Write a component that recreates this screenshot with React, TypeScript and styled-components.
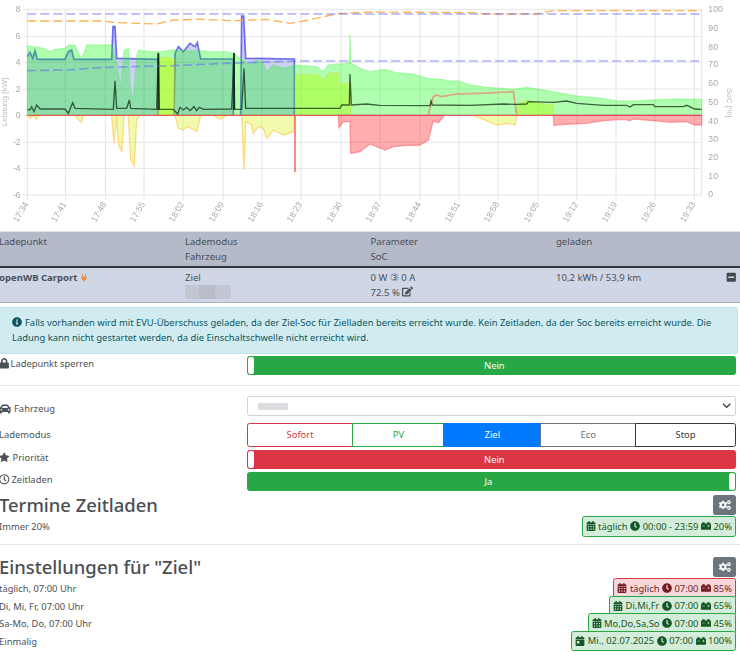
import React from "react";
import styled, { createGlobalStyle } from "styled-components";
import {
  FaCalendarAlt,
  FaCalendarDay,
  FaCar,
  FaCarBattery,
  FaChevronDown,
  FaClock,
  FaCogs,
  FaEdit,
  FaInfoCircle,
  FaLock,
  FaMinusSquare,
  FaPlug,
  FaRegClock,
  FaStar,
} from "react-icons/fa";

const GlobalStyle = createGlobalStyle`
  * {
    box-sizing: border-box;
  }
  html, body {
    margin: 0;
    padding: 0;
    background: #fff;
    overflow: hidden;
  }
  body {
    font-family: "Noto Sans", "Open Sans", sans-serif;
    font-size: 9.4px;
    line-height: 1.5;
    color: #4c5157;
  }
`;

const Page = styled.div`
  width: 741px;
  height: 655px;
  margin-left: -1px;
  overflow: hidden;
`;

const ChartBox = styled.div`
  height: 231px;
  svg {
    display: block;
    margin-left: 1px;
    filter: blur(0.45px);
  }
`;

const HeadRow = styled.div`
  display: grid;
  grid-template-columns: 186px 185.5px 185.5px 1fr;
  height: 37px;
  padding-top: 2px;
  background: #b4bac8;
  border-top: 1px solid #dee2e6;
  border-bottom: 2px solid #33373d;
  font-size: 9.55px;
  font-weight: 700;
  color: #4a4e58;
  line-height: 15px;
`;

const BodyRow = styled.div`
  display: grid;
  grid-template-columns: 186px 185.5px 185.5px 1fr;
  height: 35px;
  padding-top: 2px;
  background: #cfd6e6;
  border-bottom: 1px solid #a9adb6;
  font-size: 9.55px;
  line-height: 15px;
`;

const Cell = styled.div<{ $bold?: boolean }>`
  position: relative;
  font-weight: ${(p) => (p.$bold ? 700 : 400)};
  svg {
    vertical-align: -1px;
  }
`;

const Redacted = styled.div<{ $w: number; $h: number }>`
  width: ${(p) => p.$w}px;
  height: ${(p) => p.$h}px;
  background: linear-gradient(90deg, #c2c6d1 0 30%, #b9bdc9 30% 65%, #c3c7d3 65% 100%);
  filter: blur(0.6px);
`;

const Collapse = styled.span`
  position: absolute;
  right: 4px;
  top: 0;
  color: #43474e;
  font-size: 10.5px;
`;

const Alert = styled.div`
  margin: 4px 2px 0 0;
  height: 47px;
  padding: 7px 6px 0 12px;
  background: #d1ecf1;
  border: 1px solid #bee5eb;
  border-radius: 2px;
  color: #0c5460;
  line-height: 15px;
  svg {
    vertical-align: -1px;
    margin-right: 3px;
  }
`;

const SettingRow = styled.div<{ $mt: number; $h: number }>`
  display: grid;
  grid-template-columns: 247.7px minmax(0, 1fr);
  align-items: start;
  height: ${(p) => p.$h}px;
  margin-top: ${(p) => p.$mt}px;
  margin-right: 4px;
`;

const Label = styled.div<{ $off?: number; $gap?: number }>`
  display: flex;
  align-items: center;
  gap: ${(p) => p.$gap ?? 2}px;
  margin-top: ${(p) => p.$off ?? 0}px;
  line-height: 15px;
  svg {
    font-size: 10.5px;
  }
`;

const Toggle = styled.div<{ $on: boolean; $color: string }>`
  display: flex;
  flex-direction: ${(p) => (p.$on ? "row-reverse" : "row")};
  align-items: center;
  height: 19px;
  border: 1px solid ${(p) => p.$color};
  border-radius: 2.5px;
  background: ${(p) => p.$color};
  color: #fff;
  overflow: hidden;
`;

const Handle = styled.span`
  width: 6px;
  height: 100%;
  background: #fff;
  border-radius: 2px;
`;

const ToggleText = styled.span`
  flex: 1;
  padding-top: 1px;
  text-align: center;
`;

const Divider = styled.hr<{ $mt: number }>`
  margin: ${(p) => p.$mt}px 0 0;
  border: 0;
  border-top: 1px solid #e3e5e8;
`;

const SelectBox = styled.div`
  display: flex;
  align-items: center;
  justify-content: space-between;
  height: 20px;
  padding: 0 4px 0 10px;
  border: 1px solid #ced4da;
  border-radius: 2.5px;
  color: #4c5157;
`;

const SelectValue = styled.div`
  width: 30px;
  height: 7px;
  background: #dcdde0;
  filter: blur(0.5px);
`;

const ButtonGroup = styled.div`
  display: flex;
  height: 24px;
`;

const Segment = styled.div<{ $color: string; $grow: number; $active?: boolean }>`
  flex: ${(p) => p.$grow} 1 0;
  display: flex;
  align-items: center;
  justify-content: center;
  border: 1px solid ${(p) => p.$color};
  margin-left: -1px;
  color: ${(p) => (p.$active ? "#fff" : p.$color)};
  background: ${(p) => (p.$active ? p.$color : "#fff")};
  &:first-child {
    margin-left: 0;
    border-radius: 2.5px 0 0 2.5px;
  }
  &:last-child {
    border-radius: 0 2.5px 2.5px 0;
  }
`;

const SectionHead = styled.div<{ $mt: number; $mb?: number }>`
  display: flex;
  justify-content: space-between;
  align-items: center;
  height: 20px;
  margin: ${(p) => p.$mt}px 4px ${(p) => p.$mb ?? 1}px 0;
`;

const Title = styled.h3`
  margin: 0;
  font-size: 18.4px;
  font-weight: 500;
  line-height: 20px;
  color: #4a4e54;
`;

const GearButton = styled.div`
  display: flex;
  align-items: center;
  justify-content: center;
  width: 23px;
  height: 20px;
  background: #6c757d;
  border-radius: 2.5px;
  color: #fff;
  font-size: 12px;
`;

const PlanRow = styled.div<{ $h?: number }>`
  display: flex;
  justify-content: space-between;
  align-items: flex-start;
  height: ${(p) => p.$h ?? 17.5}px;
  margin-right: 4px;
  line-height: 21px;
`;

const Badge = styled.div<{ $red?: boolean }>`
  display: flex;
  align-items: center;
  gap: 2.5px;
  flex: none;
  height: 20.5px;
  padding: 0 3px;
  background: ${(p) => (p.$red ? "#f8d7da" : "#d4edda")};
  border: 1px solid ${(p) => (p.$red ? "#dc3545" : "#28a745")};
  border-radius: 2.5px;
  color: ${(p) => (p.$red ? "#721c24" : "#155724")};
  position: relative;
  svg {
    font-size: 10px;
  }
`;

/* chart coordinates are 3x screen pixels */
const ZERO = 346;
const line = (pts: number[][]) => pts.map((p) => p.join(",")).join(" ");
const area = (pts: number[][]) => {
  const first = pts[0][0];
  const last = pts[pts.length - 1][0];
  return line([[first, ZERO], ...pts, [last, ZERO]]);
};

const gridX = [82, 196, 316, 432, 549, 669, 786, 903, 1023, 1140, 1260, 1377, 1494, 1614, 1731, 1848, 1965, 2083];
const xLabels = ["17:34", "17:41", "17:48", "17:55", "18:02", "18:09", "18:16", "18:23", "18:30", "18:37", "18:44", "18:51", "18:58", "19:05", "19:12", "19:19", "19:26", "19:33"];
const gridY = [28, 109, 187, 267, 346, 427, 505, 585];
const kwLabels = ["8", "6", "4", "2", "0", "-2", "-4", "-6"];
const socLabels: [string, number][] = [["100", 28], ["90", 85], ["80", 140], ["70", 193], ["60", 250], ["50", 305], ["40", 362], ["30", 417], ["20", 472], ["10", 527], ["0", 582]];

const pv = [[82,137],[100,140],[130,145],[150,155],[165,148],[195,145],[205,135],[225,135],[240,172],[250,165],[260,135],[335,135],[345,170],[352,195],[362,265],[372,150],[385,145],[390,260],[400,302],[410,170],[415,150],[450,155],[480,155],[520,150],[560,152],[600,152],[640,155],[680,155],[700,160],[720,175],[750,195],[770,180],[790,190],[800,215],[820,195],[850,205],[885,195],[950,200],[970,215],[985,195],[1040,190],[1048,190],[1050,102],[1053,190],[1080,205],[1110,215],[1140,210],[1155,208],[1190,218],[1240,222],[1280,235],[1325,238],[1345,243],[1375,243],[1410,255],[1460,262],[1510,265],[1540,268],[1580,262],[1630,270],[1670,277],[1730,288],[1790,293],[1850,302],[1910,303],[1960,300],[2030,297],[2105,298]];
const blueA = [[82,170],[90,157],[98,175],[105,152],[112,178],[195,178],[205,155],[215,150],[222,178],[335,178],[339,80],[345,80],[350,175],[475,178],[475,346]];
const blueB = [[522,346],[525,160],[535,140],[550,155],[570,130],[585,140],[592,128],[602,177],[700,177],[700,346]];
const blueC = [[722,346],[725,48],[731,48],[737,175],[883,177],[883,346]];
const limeA = [[475,175],[500,172],[523,177]];
const limeB = [[885,224],[950,222],[972,240],[985,220],[1015,218],[1018,250],[1050,250],[1054,346]];
const limeC = [[1550,346],[1553,312],[1580,300],[1610,308],[1660,315]];
const yellowLow = [[82,346],[90,355],[100,346],[110,358],[118,346],[225,346],[243,367],[250,346],[335,346],[342,430],[350,346],[355,430],[365,457],[372,346],[385,346],[392,480],[403,497],[410,360],[420,346],[525,346],[535,385],[550,390],[560,380],[575,385],[590,395],[602,346],[640,346],[660,358],[680,346],[725,346],[732,510],[737,365],[755,375],[760,400],[775,380],[790,385],[800,415],[820,390],[850,405],[880,395],[885,346]];
const yellowRight = [[1420,346],[1450,358],[1490,375],[1520,370],[1545,375],[1550,346]];
const redA = [[1015,346],[1017,383],[1030,365],[1050,365],[1052,460],[1080,455],[1110,432],[1155,450],[1180,440],[1210,437],[1260,435],[1285,420],[1300,362],[1315,368],[1332,348]];
const redB = [[1660,346],[1662,376],[1710,372],[1760,370],[1810,362],[1870,358],[1890,362],[1900,357],[1960,362],[2010,367],[2060,365],[2085,375],[2105,375]];
const house = [[82,328],[90,330],[95,320],[102,335],[110,315],[120,327],[195,327],[205,340],[218,308],[225,325],[340,328],[345,242],[350,325],[380,325],[388,300],[392,325],[470,328],[475,158],[478,328],[520,328],[533,342],[540,322],[550,330],[560,322],[570,332],[582,320],[590,332],[598,322],[610,328],[695,327],[702,158],[704,328],[725,328],[732,205],[737,325],[1020,325],[1025,315],[1048,315],[1050,222],[1054,315],[1100,312],[1140,316],[1290,317],[1293,303],[1297,315],[1410,316],[1510,312],[1550,313],[1580,312],[1585,305],[1660,307],[1700,303],[1730,310],[1810,316],[1880,316],[1890,321],[1900,314],[1960,314],[1965,320],[2050,320],[2060,316],[2085,327],[2105,328]];
const dashOrange = [[82,63],[310,63],[340,67],[410,70],[470,72],[520,60],[600,58],[700,62],[800,58],[870,70],[900,65],[1020,40],[1110,36],[1430,38],[1450,42],[1610,42],[1660,32],[2105,32]];
const dashBlue = [[82,212],[200,210],[300,203],[400,200],[520,197],[680,190],[885,183],[2105,183]];
const blues = [blueA, blueB, blueC];

const Chart = () => (
  <svg width={740} height={230} viewBox="0 0 2220 690">
    {gridX.map((x) => (
      <line key={x} x1={x} x2={x} y1={28} y2={600} stroke="#e4e4e4" strokeWidth={3} />
    ))}
    <line x1={2105} x2={2105} y1={28} y2={585} stroke="#e4e4e4" strokeWidth={3} />
    {gridY.map((y) => (
      <line key={y} x1={70} x2={2105} y1={y} y2={y} stroke="#e6e6e6" strokeWidth={3} />
    ))}
    {blues.map((b) => (
      <g key={b[0][0]}>
        <polygon points={line(b[0][0] === 82 ? b.concat([[82, 346]]) : b)} fill="rgba(0,20,200,0.2)" />
        <polyline points={line(b)} fill="none" stroke="rgba(40,40,230,0.65)" strokeWidth={5} />
      </g>
    ))}
    <polygon points={area(pv)} fill="rgba(0,255,0,0.31)" stroke="rgba(60,240,60,0.3)" strokeWidth={4} />
    <polygon points={area(limeA)} fill="rgba(190,255,0,0.5)" stroke="rgba(255,190,60,0.35)" strokeWidth={3} />
    <polygon points={area(limeB)} fill="rgba(170,255,0,0.42)" stroke="rgba(255,190,60,0.3)" strokeWidth={3} />
    <polygon points={area(limeC)} fill="rgba(170,255,0,0.42)" stroke="rgba(255,190,60,0.3)" strokeWidth={3} />
    <polygon points={area(yellowLow)} fill="rgba(225,245,60,0.42)" stroke="rgba(255,190,60,0.55)" strokeWidth={4} />
    <polygon points={area(yellowRight)} fill="rgba(225,245,60,0.42)" stroke="rgba(255,190,60,0.55)" strokeWidth={4} />
    <polygon points={area(redA)} fill="rgba(255,0,0,0.32)" stroke="rgba(255,80,100,0.5)" strokeWidth={4} />
    <polygon points={area(redB)} fill="rgba(255,0,0,0.32)" stroke="rgba(255,80,100,0.5)" strokeWidth={4} />
    <polyline points={line([[1285,343],[1300,290],[1310,285],[1325,290],[1370,282],[1440,280],[1540,275],[1550,343]])} fill="none" stroke="rgba(255,90,80,0.55)" strokeWidth={5} />
    <line x1={82} x2={2105} y1={ZERO} y2={ZERO} stroke="rgba(225,50,90,0.75)" strokeWidth={4} />
    <line x1={885} x2={885} y1={ZERO} y2={516} stroke="rgba(255,50,50,0.7)" strokeWidth={5} />
    <polyline points={line(house)} fill="none" stroke="rgba(10,30,10,0.7)" strokeWidth={4} />
    <line x1={475} x2={475} y1={160} y2={330} stroke="rgba(10,30,10,0.75)" strokeWidth={6} />
    <line x1={702} x2={702} y1={160} y2={330} stroke="rgba(10,30,10,0.75)" strokeWidth={6} />
    <polyline points={line(dashOrange)} fill="none" stroke="rgba(255,165,50,0.85)" strokeWidth={4} strokeDasharray="27 12" />
    <polyline points={line(dashBlue)} fill="none" stroke="rgba(90,100,255,0.5)" strokeWidth={5} strokeDasharray="27 12" />
    <line x1={82} x2={2105} y1={42} y2={42} stroke="rgba(90,90,255,0.5)" strokeWidth={5} strokeDasharray="27 12" />
    <g fontFamily="Liberation Sans, sans-serif" fontSize={26} fill="#a8a8a8">
      {gridY.map((y, i) => (
        <text key={y} x={62} y={y + 9} textAnchor="end">{kwLabels[i]}</text>
      ))}
      {socLabels.map(([t, y]) => (
        <text key={t} x={2125} y={y + 9}>{t}</text>
      ))}
      {gridX.map((x, i) => (
        <text key={x} x={x + 4} y={612} textAnchor="end" transform={`rotate(-60 ${x + 4} 612)`}>{xLabels[i]}</text>
      ))}
    </g>
    <g fontFamily="Liberation Sans, sans-serif" fontSize={24} fill="#bdbdbd">
      <text x={22} y={306} textAnchor="middle" transform="rotate(-90 22 306)">Leistung [kW]</text>
      <text x={2180} y={308} textAnchor="middle" transform="rotate(90 2180 308)">SoC [%]</text>
    </g>
  </svg>
);

type Plan = { label: string; day: string; time: string; soc: string; red?: boolean; once?: boolean };

const plans: Plan[] = [
  { label: "täglich, 07:00 Uhr", day: "täglich", time: "07:00", soc: "85%", red: true },
  { label: "Di, Mi, Fr, 07:00 Uhr", day: "Di,Mi,Fr", time: "07:00", soc: "65%" },
  { label: "Sa-Mo, Do, 07:00 Uhr", day: "Mo,Do,Sa,So", time: "07:00", soc: "45%" },
  { label: "Einmalig", day: "Mi., 02.07.2025", time: "07:00", soc: "100%", once: true },
];

const PlanBadge = ({ day, time, soc, red, once }: Omit<Plan, "label">) => (
  <Badge $red={red}>
    {once ? <FaCalendarDay /> : <FaCalendarAlt />}
    {day} <FaClock /> {time} <FaCarBattery /> {soc}
  </Badge>
);

export default function App() {
  return (
    <Page>
      <GlobalStyle />
      <ChartBox>
        <Chart />
      </ChartBox>

      <HeadRow>
        <Cell>Ladepunkt</Cell>
        <Cell>
          Lademodus
          <br />
          Fahrzeug
        </Cell>
        <Cell>
          Parameter
          <br />
          SoC
        </Cell>
        <Cell>geladen</Cell>
      </HeadRow>
      <BodyRow>
        <Cell $bold>
          openWB Carport <FaPlug color="#f58a42" size={8} />
        </Cell>
        <Cell>
          Ziel
          <Redacted $w={46} $h={14} />
        </Cell>
        <Cell>
          0 W ③ 0 A
          <br />
          72.5 % <FaEdit size={11} />
        </Cell>
        <Cell>
          10,2 kWh / 53,9 km
          <Collapse>
            <FaMinusSquare />
          </Collapse>
        </Cell>
      </BodyRow>

      <Alert>
        <FaInfoCircle size={10} />
        Falls vorhanden wird mit EVU-Überschuss geladen, da der Ziel-Soc für Zielladen bereits erreicht wurde. Kein Zeitladen, da der Soc bereits erreicht wurde. Die Ladung kann nicht gestartet werden, da die Einschaltschwelle nicht erreicht wird.
      </Alert>

      <SettingRow $mt={2} $h={19}>
        <Label $off={0} $gap={1}>
          <FaLock /> Ladepunkt sperren
        </Label>
        <Toggle $on={false} $color="#28a745">
          <Handle />
          <ToggleText>Nein</ToggleText>
        </Toggle>
      </SettingRow>
      <Divider $mt={10} />

      <SettingRow $mt={10} $h={20}>
        <Label $off={5} $gap={3}>
          <FaCar size={12} /> Fahrzeug
        </Label>
        <SelectBox>
          <SelectValue />
          <FaChevronDown color="#43474e" />
        </SelectBox>
      </SettingRow>
      <SettingRow $mt={7} $h={24}>
        <Label $off={4}>Lademodus</Label>
        <ButtonGroup>
          <Segment $color="#dc3545" $grow={106}>Sofort</Segment>
          <Segment $color="#28a745" $grow={91}>PV</Segment>
          <Segment $color="#007bff" $grow={97} $active>Ziel</Segment>
          <Segment $color="#6c757d" $grow={95}>Eco</Segment>
          <Segment $color="#343a40" $grow={100}>Stop</Segment>
        </ButtonGroup>
      </SettingRow>
      <SettingRow $mt={3} $h={19}>
        <Label $off={0} $gap={3}>
          <FaStar /> Priorität
        </Label>
        <Toggle $on={false} $color="#dc3545">
          <Handle />
          <ToggleText>Nein</ToggleText>
        </Toggle>
      </SettingRow>
      <SettingRow $mt={3} $h={19}>
        <Label $off={0} $gap={2}>
          <FaRegClock /> Zeitladen
        </Label>
        <Toggle $on $color="#28a745">
          <Handle />
          <ToggleText>Ja</ToggleText>
        </Toggle>
      </SettingRow>

      <SectionHead $mt={4}>
        <Title>Termine Zeitladen</Title>
        <GearButton>
          <FaCogs />
        </GearButton>
      </SectionHead>
      <PlanRow $h={21}>
        <span>Immer 20%</span>
        <PlanBadge day="täglich" time="00:00 - 23:59" soc="20%" />
      </PlanRow>
      <Divider $mt={7} />

      <SectionHead $mt={12}>
        <Title>Einstellungen für "Ziel"</Title>
        <GearButton>
          <FaCogs />
        </GearButton>
      </SectionHead>
      {plans.map((p) => (
        <PlanRow key={p.label}>
          <span>{p.label}</span>
          <PlanBadge day={p.day} time={p.time} soc={p.soc} red={p.red} once={p.once} />
        </PlanRow>
      ))}
    </Page>
  );
}
